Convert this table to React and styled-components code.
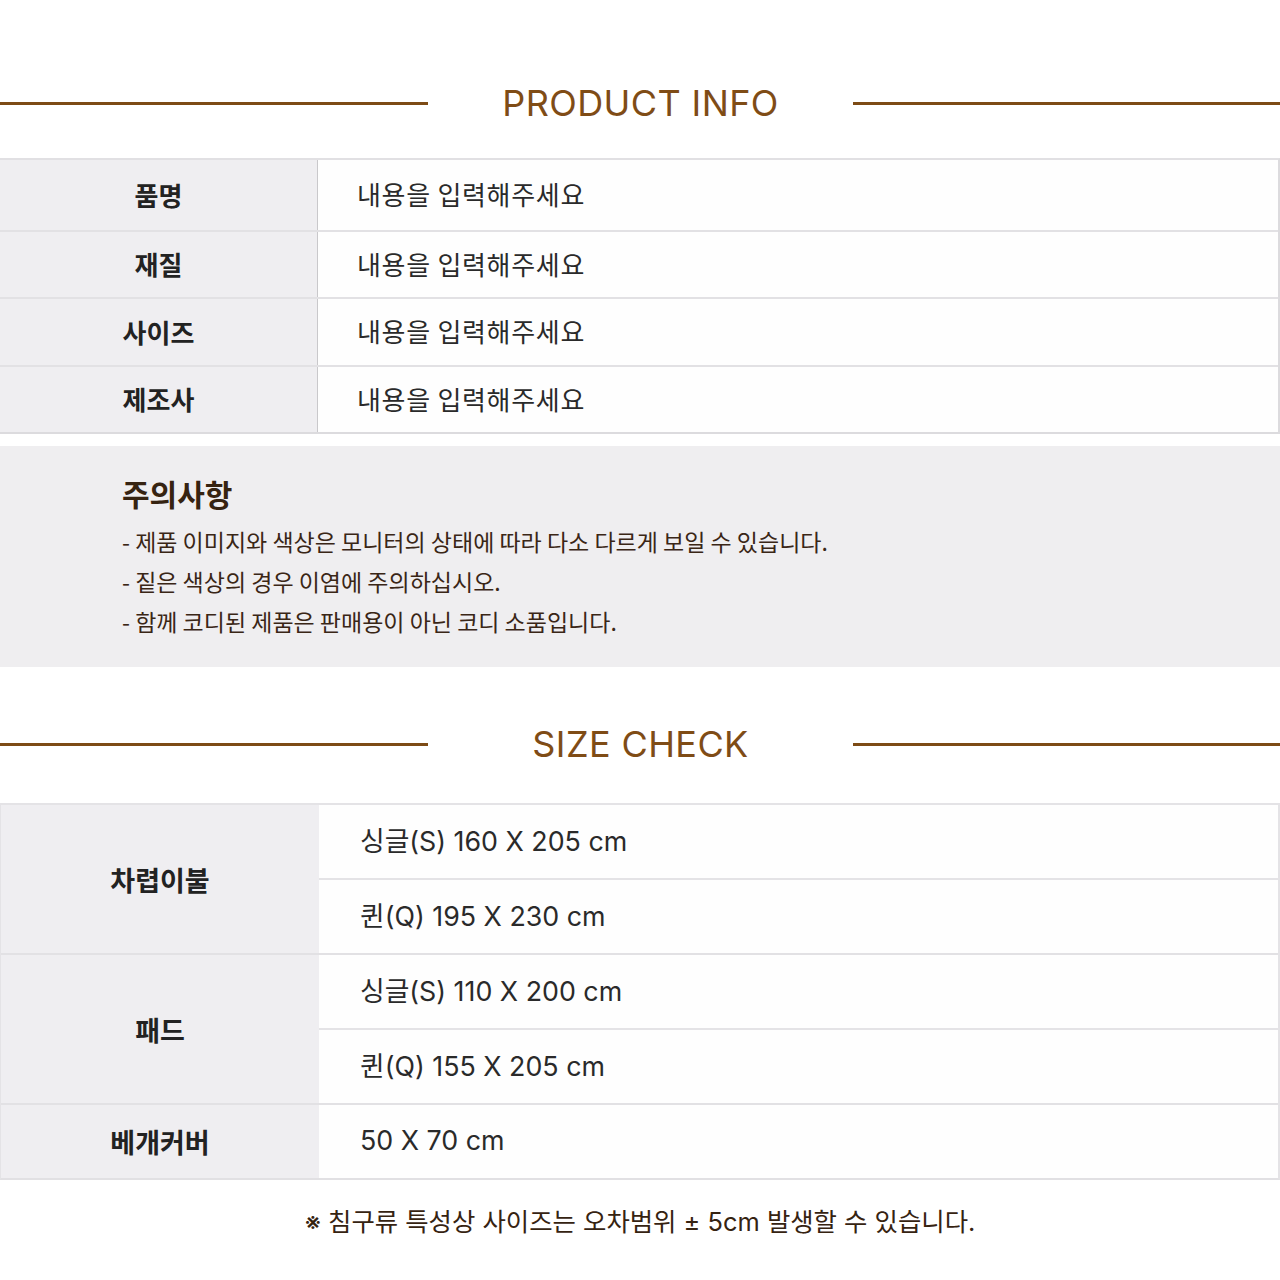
import styled, { createGlobalStyle } from "styled-components";

const GlobalStyle = createGlobalStyle`
  body {
    margin: 0;
    background: #ffffff;
    font-family: "Inter", "Noto Sans CJK KR", sans-serif;
  }
`;

const PRODUCT_ROWS = [
  { label: "품명", value: "내용을 입력해주세요", height: 72 },
  { label: "재질", value: "내용을 입력해주세요", height: 67 },
  { label: "사이즈", value: "내용을 입력해주세요", height: 68 },
  { label: "제조사", value: "내용을 입력해주세요", height: 67 },
];

const NOTICES = [
  "- 제품 이미지와 색상은 모니터의 상태에 따라 다소 다르게 보일 수 있습니다.",
  "- 짙은 색상의 경우 이염에 주의하십시오.",
  "- 함께 코디된 제품은 판매용이 아닌 코디 소품입니다.",
];

const SIZE_GROUPS = [
  { label: "차렵이불", sizes: ["싱글(S) 160 X 205 cm", "퀸(Q) 195 X 230 cm"] },
  { label: "패드", sizes: ["싱글(S) 110 X 200 cm", "퀸(Q) 155 X 205 cm"] },
  { label: "베개커버", sizes: ["50 X 70 cm"] },
];

export default function App() {
  return (
    <Page>
      <GlobalStyle />

      <SectionTitle>
        <Rule />
        <TitleText>PRODUCT INFO</TitleText>
        <Rule />
      </SectionTitle>

      <InfoTable>
        {PRODUCT_ROWS.map((row) => (
          <InfoRow key={row.label} $height={row.height}>
            <InfoLabel>{row.label}</InfoLabel>
            <InfoValue>{row.value}</InfoValue>
          </InfoRow>
        ))}
      </InfoTable>

      <NoticeBox>
        <NoticeTitle>주의사항</NoticeTitle>
        <NoticeList>
          {NOTICES.map((n) => (
            <NoticeItem key={n}>{n}</NoticeItem>
          ))}
        </NoticeList>
      </NoticeBox>

      <SectionTitle $top={54}>
        <Rule />
        <TitleText>SIZE CHECK</TitleText>
        <Rule />
      </SectionTitle>

      <SizeTable>
        {SIZE_GROUPS.map((g) => (
          <SizeGroup key={g.label}>
            <SizeLabel>{g.label}</SizeLabel>
            <SizeValues>
              {g.sizes.map((s) => (
                <SizeValue key={s}>{s}</SizeValue>
              ))}
            </SizeValues>
          </SizeGroup>
        ))}
      </SizeTable>

      <Footnote>※ 침구류 특성상 사이즈는 오차범위 ± 5cm 발생할 수 있습니다.</Footnote>
    </Page>
  );
}

const Page = styled.div`
  width: 1280px;
  height: 1280px;
  padding-top: 80px;
  box-sizing: border-box;
  background: #ffffff;
  overflow: hidden;
`;

const SectionTitle = styled.div`
  display: grid;
  grid-template-columns: 428px 1fr 427px;
  align-items: center;
  height: 46px;
  margin-top: ${(p) => p.$top || 0}px;
`;

const Rule = styled.div`
  height: 3px;
  background: #7d4b15;
`;

const TitleText = styled.h2`
  margin: 0;
  text-align: center;
  font-family: "Inter", sans-serif;
  font-weight: 400;
  font-size: 36px;
  line-height: 46px;
  color: #7f4c16;
  letter-spacing: 0.4px;
`;

const InfoTable = styled.div`
  margin-top: 32px;
  border-top: 2px solid #e1e0e3;
  border-right: 2px solid #dcdbde;
  border-bottom: 2px solid #dcdbde;
`;

const InfoRow = styled.div`
  display: grid;
  grid-template-columns: 318px 1fr;
  height: ${(p) => p.$height - 2}px;
  & + & {
    border-top: 2px solid #e2e1e4;
  }
`;

const InfoLabel = styled.div`
  display: flex;
  align-items: center;
  justify-content: center;
  padding-bottom: 2px;
  background: #efeef1;
  border-right: 1px solid #c9c8cb;
  font-family: "Noto Sans CJK KR", sans-serif;
  font-weight: 700;
  font-size: 26px;
  color: #222222;
`;

const InfoValue = styled.div`
  display: flex;
  align-items: center;
  padding-left: 39px;
  padding-bottom: 3px;
  background: #fefefe;
  font-family: "Noto Sans CJK KR", sans-serif;
  font-weight: 400;
  font-size: 26px;
  letter-spacing: 0.7px;
  color: #2a2a2a;
`;

const NoticeBox = styled.div`
  margin-top: 12px;
  height: 221px;
  box-sizing: border-box;
  padding: 27px 122px 0;
  background: #efeef0;
`;

const NoticeTitle = styled.h3`
  margin: 0;
  font-family: "Noto Sans CJK KR", sans-serif;
  font-weight: 700;
  font-size: 30px;
  line-height: 40px;
  color: #362311;
`;

const NoticeList = styled.div`
  display: flex;
  flex-direction: column;
  margin-top: 8px;
`;

const NoticeItem = styled.p`
  margin: 0;
  font-family: "Noto Sans CJK KR", sans-serif;
  font-weight: 400;
  font-size: 23px;
  line-height: 40px;
  color: #3a2616;
`;

const SizeTable = styled.div`
  margin-top: 36px;
  border-top: 2px solid #e4e3e6;
  border-left: 1px solid #e4e3e6;
  border-right: 2px solid #e4e3e6;
  border-bottom: 2px solid #e1e0e3;
`;

const SizeGroup = styled.div`
  display: grid;
  grid-template-columns: 318px 1fr;
  & + & {
    border-top: 2px solid #e2e1e4;
  }
`;

const SizeLabel = styled.div`
  display: flex;
  align-items: center;
  justify-content: center;
  background: #efeef1;
  font-family: "Noto Sans CJK KR", sans-serif;
  font-weight: 700;
  font-size: 27px;
  color: #222222;
`;

const SizeValues = styled.div`
  display: flex;
  flex-direction: column;
`;

const SizeValue = styled.div`
  display: flex;
  align-items: center;
  height: 73px;
  padding-left: 41px;
  padding-bottom: 4px;
  box-sizing: border-box;
  background: #fefefe;
  font-family: "Inter", "Noto Sans CJK KR", sans-serif;
  font-weight: 400;
  font-size: 26.8px;
  color: #2a2a2a;
  & + & {
    height: 75px;
    border-top: 2px solid #e4e3e6;
  }
`;

const Footnote = styled.p`
  margin: 24px 0 0;
  text-align: center;
  font-family: "Inter", "Noto Sans CJK KR", sans-serif;
  font-weight: 400;
  font-size: 25.4px;
  line-height: 36px;
  color: #362311;
`;
